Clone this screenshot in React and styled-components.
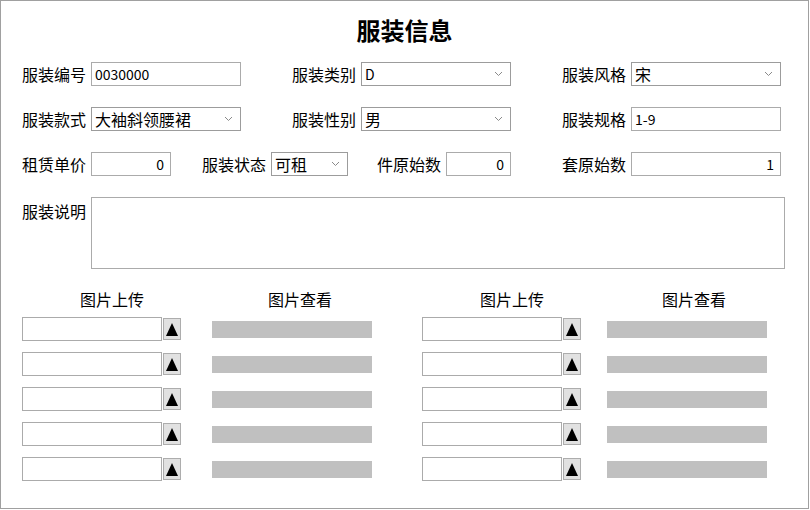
import React from "react";
import styled, { createGlobalStyle } from "styled-components";

const Global = createGlobalStyle`
  html, body { margin: 0; padding: 0; background: #fff; }
  body { font-family: "Noto Sans CJK SC", "Noto Sans", sans-serif; color: #000; }
  * { box-sizing: border-box; }
`;

const Frame = styled.div`
  width: 809px;
  height: 509px;
  border: 1px solid #a0a0a0;
  padding: 0 0 0 21px;
  display: flex;
  flex-direction: column;
  overflow: hidden;
`;

const Title = styled.h1`
  margin: 14px 0 0 -21px;
  height: 30px;
  line-height: 30px;
  text-align: center;
  font-size: 24px;
  font-weight: 700;
`;

const Row = styled.div`
  display: flex;
  align-items: ${(p) => (p.$top ? "flex-start" : "center")};
  margin-top: ${(p) => p.$mt}px;
`;

const Field = styled.div`
  display: flex;
  align-items: ${(p) => (p.$top ? "flex-start" : "center")};
  width: ${(p) => (p.$w ? `${p.$w}px` : "auto")};
  flex: none;
`;

const Label = styled.span`
  width: 64px;
  font-size: 16px;
  line-height: 22px;
  white-space: nowrap;
  margin-right: 5px;
  margin-top: ${(p) => (p.$top ? "3px" : "0")};
`;

const Box = styled.div`
  width: ${(p) => p.$w}px;
  height: ${(p) => p.$h || 24}px;
  border: 1px solid ${(p) => (p.$select ? "#9c9c9c" : "#ababab")};
  background: #fff;
  display: flex;
  align-items: center;
  justify-content: ${(p) => (p.$right ? "flex-end" : "flex-start")};
  padding: 0 ${(p) => (p.$right ? "6px" : "3px")};
  font-size: ${(p) => (p.$cjk ? "16px" : "14px")};
  line-height: 20px;
  white-space: nowrap;
  overflow: hidden;
`;

const BoxText = styled.span`
  flex: 1;
`;

const Chevron = () => (
  <svg width="9" height="6" viewBox="0 0 9 6" style={{ marginRight: 4 }}>
    <polyline points="1,1 4.5,4.5 8,1" fill="none" stroke="#8a8a8a" strokeWidth="1" />
  </svg>
);

const Select = ({ w, value, cjk }) => (
  <Box $w={w} $select $cjk={cjk}>
    <BoxText>{value}</BoxText>
    <Chevron />
  </Box>
);

const Uploads = styled.div`
  display: flex;
  margin-top: 20px;
`;

const Group = styled.div`
  width: 400px;
  flex: none;
  display: flex;
  flex-direction: column;
`;

const Heads = styled.div`
  display: flex;
  height: 20px;
  margin-bottom: 8px;
`;

const Head = styled.div`
  width: ${(p) => p.$w}px;
  text-align: center;
  font-size: 16px;
  line-height: 20px;
`;

const UpRow = styled.div`
  display: flex;
  align-items: center;
  margin-bottom: 11px;
`;

const FileBox = styled.div`
  width: 140px;
  height: 24px;
  border: 1px solid #ababab;
  background: #fff;
`;

const UpButton = styled.div`
  width: 18px;
  height: 22px;
  margin-left: 1px;
  background: #e1e1e1;
  border: 1px solid #adadad;
  display: flex;
  align-items: center;
  justify-content: center;
`;

const Bar = styled.div`
  width: 160px;
  height: 17px;
  background: #c0c0c0;
  margin-left: ${(p) => p.$gap}px;
`;

const Triangle = () => (
  <svg width="12" height="13" viewBox="0 0 12 13">
    <polygon points="6,0 12,13 0,13" fill="#000" />
  </svg>
);

const UploadGroup = ({ barGap, headW }) => (
  <Group>
    <Heads>
      <Head $w={180}>图片上传</Head>
      <Head $w={headW}>图片查看</Head>
    </Heads>
    {[0, 1, 2, 3, 4].map((i) => (
      <UpRow key={i}>
        <FileBox />
        <UpButton>
          <Triangle />
        </UpButton>
        <Bar $gap={barGap} />
      </UpRow>
    ))}
  </Group>
);

export default function App() {
  return (
    <>
      <Global />
      <Frame>
        <Title>服装信息</Title>
        <Row $mt={17}>
          <Field $w={270}>
            <Label>服装编号</Label>
            <Box $w={150}>0030000</Box>
          </Field>
          <Field $w={270}>
            <Label>服装类别</Label>
            <Select w={150} value="D" />
          </Field>
          <Field>
            <Label>服装风格</Label>
            <Select w={150} value="宋" cjk />
          </Field>
        </Row>
        <Row $mt={21}>
          <Field $w={270}>
            <Label>服装款式</Label>
            <Select w={150} value="大袖斜领腰裙" cjk />
          </Field>
          <Field $w={270}>
            <Label>服装性别</Label>
            <Select w={150} value="男" cjk />
          </Field>
          <Field>
            <Label>服装规格</Label>
            <Box $w={150}>1-9</Box>
          </Field>
        </Row>
        <Row $mt={21}>
          <Field $w={180}>
            <Label>租赁单价</Label>
            <Box $w={80} $right>0</Box>
          </Field>
          <Field $w={175}>
            <Label>服装状态</Label>
            <Select w={77} value="可租" cjk />
          </Field>
          <Field $w={185}>
            <Label>件原始数</Label>
            <Box $w={65} $right>0</Box>
          </Field>
          <Field>
            <Label>套原始数</Label>
            <Box $w={150} $right>1</Box>
          </Field>
        </Row>
        <Row $mt={21} $top>
          <Field $top>
            <Label $top>服装说明</Label>
            <Box $w={694} $h={72} />
          </Field>
        </Row>
        <Uploads>
          <UploadGroup barGap={31} headW={196} />
          <UploadGroup barGap={26} headW={184} />
        </Uploads>
      </Frame>
    </>
  );
}
